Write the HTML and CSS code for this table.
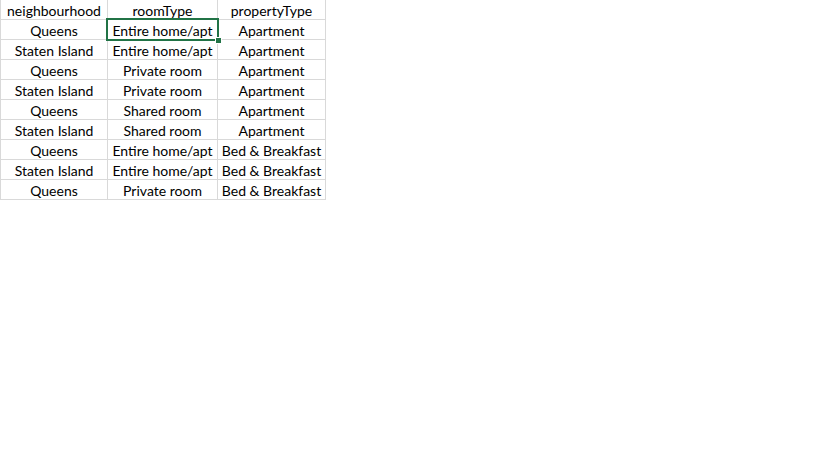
FILE: index.html
```html
<!DOCTYPE html>
<html>
<head>
<meta charset="utf-8">
<link rel="stylesheet" href="styles.css">
</head>
<body>
<div class="sheet">
  <div class="cell">neighbourhood</div><div class="cell">roomType</div><div class="cell">propertyType</div>
  <div class="cell">Queens</div><div class="cell selected">Entire home/apt<span class="sel-box"></span><span class="sel-handle"></span></div><div class="cell">Apartment</div>
  <div class="cell">Staten Island</div><div class="cell">Entire home/apt</div><div class="cell">Apartment</div>
  <div class="cell">Queens</div><div class="cell">Private room</div><div class="cell">Apartment</div>
  <div class="cell">Staten Island</div><div class="cell">Private room</div><div class="cell">Apartment</div>
  <div class="cell">Queens</div><div class="cell">Shared room</div><div class="cell">Apartment</div>
  <div class="cell">Staten Island</div><div class="cell">Shared room</div><div class="cell">Apartment</div>
  <div class="cell">Queens</div><div class="cell">Entire home/apt</div><div class="cell">Bed &amp; Breakfast</div>
  <div class="cell">Staten Island</div><div class="cell">Entire home/apt</div><div class="cell">Bed &amp; Breakfast</div>
  <div class="cell">Queens</div><div class="cell">Private room</div><div class="cell">Bed &amp; Breakfast</div>
</div>
</body>
</html>
```
FILE: styles.css
```css
html, body {
  margin: 0;
  padding: 0;
  background: #ffffff;
}
body {
  font-family: "Lato", "Liberation Sans", sans-serif;
  font-size: 14px;
  color: #000;
}
.sheet {
  display: grid;
  grid-template-columns: 106px 109px 107px;
  grid-auto-rows: 19px;
  column-gap: 1px;
  row-gap: 1px;
  background: #d9d9d9;
  width: 326px;
  padding: 0 1px 1px 1px;
  box-sizing: border-box;
}
.cell {
  background: #fff;
  text-align: center;
  line-height: 19px;
  padding-top: 1px;
  box-sizing: border-box;
  white-space: nowrap;
  overflow: visible;
  position: relative;
}
.sel-box {
  position: absolute;
  left: -2px;
  top: -2px;
  right: -2px;
  bottom: -2px;
  border: 2px solid #217346;
  pointer-events: none;
  z-index: 2;
}
.sel-handle {
  position: absolute;
  right: -5px;
  bottom: -5px;
  width: 5px;
  height: 5px;
  background: #217346;
  border: 1px solid #fff;
  z-index: 3;
}
```
